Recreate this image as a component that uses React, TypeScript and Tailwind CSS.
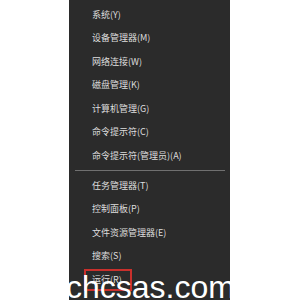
const topItems = [
  '系统(Y)',
  '设备管理器(M)',
  '网络连接(W)',
  '磁盘管理(K)',
  '计算机管理(G)',
  '命令提示符(C)',
  '命令提示符(管理员)(A)',
];

const bottomItems = ['任务管理器(T)', '控制面板(P)', '文件资源管理器(E)', '搜索(S)'];

const MenuRow = ({ label }: { label: string }) => (
  <div className="h-[23.5px] flex items-center pl-[23px] text-[9px] leading-none text-[#dedede]">
    {label}
  </div>
);

const App = () => {
  return (
    <div
      className="w-[300px] h-[300px] bg-white overflow-hidden"
      style={{ fontFamily: '"Noto Sans CJK SC", "Liberation Sans", sans-serif' }}
    >
      <div className="relative ml-[69px] w-[161px] h-[300px] bg-[#2b2b2b] overflow-hidden pt-[2.5px]">
        {topItems.map((label) => (
          <MenuRow key={label} label={label} />
        ))}

        {/* Separator */}
        <div className="h-[6.5px] flex items-center pl-[6px] pr-[5px]">
          <div className="h-px w-full bg-[#707070]"></div>
        </div>

        {bottomItems.map((label) => (
          <MenuRow key={label} label={label} />
        ))}

        {/* Run item, highlighted */}
        <div className="relative h-[23.5px] flex items-center pl-[23px] text-[9px] leading-none text-[#dedede]">
          运行(R)
          <div className="absolute left-[15px] top-[1px] w-[48px] h-[22px] border-2 border-[#c9302c]"></div>
        </div>

        {/* Watermark */}
        <div
          className="absolute left-[-3px] top-[271px] text-[32px] leading-none text-white whitespace-nowrap"
          style={{ fontFamily: '"Liberation Sans", Arial, sans-serif' }}
        >
          chcsas.com
        </div>
      </div>
    </div>
  );
};

export default App;
